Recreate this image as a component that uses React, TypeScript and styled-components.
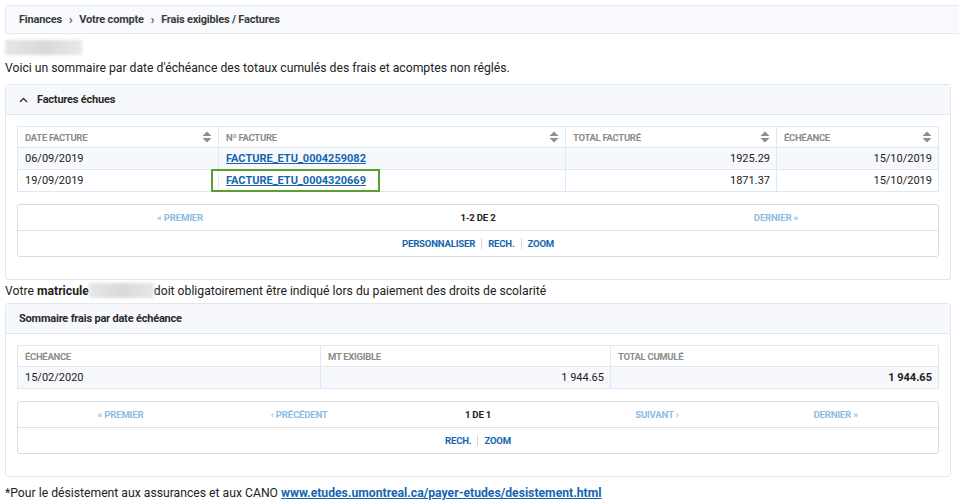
import styled, { createGlobalStyle } from "styled-components";

const GlobalStyle = createGlobalStyle`
  html, body {
    margin: 0;
    padding: 0;
    background: #ffffff;
    font-family: "Roboto", "Liberation Sans", sans-serif;
    color: #222222;
  }
`;

type SortCol = { label: string; sortable?: boolean };

const invoices = [
  { date: "06/09/2019", no: "FACTURE_ETU_0004259082", total: "1925.29", due: "15/10/2019" },
  { date: "19/09/2019", no: "FACTURE_ETU_0004320669", total: "1871.37", due: "15/10/2019", focus: true },
];

const SortIcon = () => (
  <svg width="10" height="12" viewBox="0 0 10 12">
    <path d="M5 0.5 L9.5 5 L0.5 5 Z" fill="#8a8f96" />
    <path d="M5 11.5 L9.5 7 L0.5 7 Z" fill="#8a8f96" />
  </svg>
);

const ChevronUp = () => (
  <svg width="9" height="6" viewBox="0 0 9 6">
    <path d="M1 5 L4.5 1.5 L8 5" fill="none" stroke="#333" strokeWidth="1.4" />
  </svg>
);

const App = () => {
  const cols1: SortCol[] = [
    { label: "Date facture", sortable: true },
    { label: "Nº facture", sortable: true },
    { label: "Total facturé", sortable: true },
    { label: "Échéance", sortable: true },
  ];

  return (
    <Page>
      <GlobalStyle />
      <Breadcrumb>
        <Crumb>Finances</Crumb>
        <Sep>›</Sep>
        <Crumb>Votre compte</Crumb>
        <Sep>›</Sep>
        <Crumb>Frais exigibles / Factures</Crumb>
      </Breadcrumb>

      <Content>
        <Blur $w={77} />
        <Intro>
          Voici un sommaire par date d'échéance des totaux cumulés des frais et acomptes non réglés.
        </Intro>

        <Panel>
          <PanelHeader>
            <ChevronUp />
            <span>Factures échues</span>
          </PanelHeader>
          <PanelBody>
            <Table $cols="201px 347px 211px 1fr">
              {cols1.map((c) => (
                <HeadCell key={c.label}>
                  <span>{c.label}</span>
                  {c.sortable && <SortIcon />}
                </HeadCell>
              ))}
              {invoices.map((r, i) => (
                <Row key={r.no} $alt={i % 2 === 0}>
                  <Cell>{r.date}</Cell>
                  <Cell>
                    <InvoiceLink href="#" $focus={r.focus}>
                      {r.no}
                    </InvoiceLink>
                  </Cell>
                  <Cell $right>{r.total}</Cell>
                  <Cell $right>{r.due}</Cell>
                </Row>
              ))}
            </Table>

            <Pager>
              <PagerRow $cols={3}>
                <PageLink $disabled>« PREMIER</PageLink>
                <PageInfo>1-2 DE 2</PageInfo>
                <PageLink $disabled>DERNIER »</PageLink>
              </PagerRow>
              <Tools>
                <ToolLink>PERSONNALISER</ToolLink>
                <ToolSep />
                <ToolLink>RECH.</ToolLink>
                <ToolSep />
                <ToolLink>ZOOM</ToolLink>
              </Tools>
            </Pager>
          </PanelBody>
        </Panel>

        <Notice>
          Votre <b>matricule</b>
          <Blur $w={65} $inline />
          doit obligatoirement être indiqué lors du paiement des droits de scolarité
        </Notice>

        <Panel>
          <PanelHeader>
            <span>Sommaire frais par date échéance</span>
          </PanelHeader>
          <PanelBody>
            <Table $cols="303px 290px 1fr">
              <HeadCell>Échéance</HeadCell>
              <HeadCell>MT exigible</HeadCell>
              <HeadCell>Total cumulé</HeadCell>
              <Row $alt>
                <Cell>15/02/2020</Cell>
                <Cell $right>1 944.65</Cell>
                <Cell $right $bold>
                  1 944.65
                </Cell>
              </Row>
            </Table>

            <Pager>
              <PagerRow $cols={5}>
                <PageLink $disabled>« PREMIER</PageLink>
                <PageLink $disabled>‹ PRÉCÉDENT</PageLink>
                <PageInfo>1 DE 1</PageInfo>
                <PageLink $disabled>SUIVANT ›</PageLink>
                <PageLink $disabled>DERNIER »</PageLink>
              </PagerRow>
              <Tools>
                <ToolLink>RECH.</ToolLink>
                <ToolSep />
                <ToolLink>ZOOM</ToolLink>
              </Tools>
            </Pager>
          </PanelBody>
        </Panel>

        <Footer>
          *Pour le désistement aux assurances et aux CANO{" "}
          <FooterLink href="#">www.etudes.umontreal.ca/payer-etudes/desistement.html</FooterLink>
        </Footer>
      </Content>
    </Page>
  );
};

export default App;

const Page = styled.div`
  width: 959px;
  height: 501px;
  overflow: hidden;
  padding-top: 5px;
  box-sizing: border-box;
`;

const Breadcrumb = styled.div`
  margin-left: 5px;
  height: 29px;
  box-sizing: border-box;
  border: 1px solid #dceaf7;
  border-right: none;
  border-radius: 3px 0 0 3px;
  background: #f7f9fc;
  display: flex;
  align-items: center;
  gap: 7px;
  padding-left: 13px;
  font-size: 11px;
  font-weight: 700;
  color: #3c3c3c;
  letter-spacing: -0.2px;
`;

const Crumb = styled.span``;

const Sep = styled.span`
  font-size: 12px;
  color: #555;
`;

const Content = styled.div`
  padding: 0 8px 0 5px;
  display: flex;
  flex-direction: column;
`;

const Blur = styled.span<{ $w: number; $inline?: boolean }>`
  display: ${(p) => (p.$inline ? "inline-block" : "block")};
  width: ${(p) => p.$w}px;
  height: 15px;
  margin-top: ${(p) => (p.$inline ? "0" : "6px")};
  vertical-align: ${(p) => (p.$inline ? "-3px" : "baseline")};
  background: linear-gradient(90deg, #e6e6e6, #d9d9d9 50%, #e8e8e8);
  filter: blur(1.5px);
`;

const Intro = styled.div`
  font-size: 12.2px;
  line-height: 16px;
  margin-top: 5px;
  margin-bottom: 8px;
`;

const Panel = styled.section`
  border: 1px solid #d9e9f7;
  border-radius: 3px;
  background: #fff;
`;

const PanelHeader = styled.div`
  height: 30px;
  box-sizing: border-box;
  background: #f6f8fb;
  border-bottom: 1px solid #d9e9f7;
  display: flex;
  align-items: center;
  gap: 9px;
  padding-left: 13px;
  font-size: 11px;
  font-weight: 700;
  color: #2a2a2a;
  letter-spacing: -0.2px;
`;

const PanelBody = styled.div`
  padding: 11px 11px 22px 11px;
  display: flex;
  flex-direction: column;
  gap: 12px;
`;

const Table = styled.div<{ $cols: string }>`
  display: grid;
  grid-template-columns: ${(p) => p.$cols};
  border: 1px solid #d9e9f7;
  border-right: none;
  border-bottom: none;
`;

const HeadCell = styled.div`
  height: 21px;
  box-sizing: border-box;
  border-right: 1px solid #d9e9f7;
  border-bottom: 1px solid #d9e9f7;
  display: flex;
  align-items: center;
  justify-content: space-between;
  padding: 0 6px 0 7px;
  font-size: 9.5px;
  font-weight: 700;
  text-transform: uppercase;
  color: #8c8c8c;
  letter-spacing: -0.3px;
`;

const Row = styled.div<{ $alt?: boolean }>`
  display: contents;
  & > div {
    background: ${(p) => (p.$alt ? "#f6f8fb" : "#ffffff")};
  }
`;

const Cell = styled.div<{ $right?: boolean; $bold?: boolean }>`
  height: 22px;
  box-sizing: border-box;
  border-right: 1px solid #d9e9f7;
  border-bottom: 1px solid #d9e9f7;
  display: flex;
  align-items: center;
  justify-content: ${(p) => (p.$right ? "flex-end" : "flex-start")};
  padding: 0 6px 0 7px;
  font-size: 11px;
  font-weight: ${(p) => (p.$bold ? 700 : 400)};
  color: #222;
`;

const InvoiceLink = styled.a<{ $focus?: boolean }>`
  color: #1565b0;
  font-weight: 700;
  font-size: 11px;
  text-decoration: underline;
  ${(p) =>
    p.$focus &&
    `
    border: 2px solid #5b9e32;
    padding: 3px 12px 3px 13px;
    margin-left: -15px;
  `}
`;

const Pager = styled.div`
  border: 1px solid #dcdcdc;
  border-radius: 3px;
`;

const PagerRow = styled.div<{ $cols: number }>`
  display: grid;
  grid-template-columns: repeat(${(p) => p.$cols}, 1fr);
  height: 25px;
  padding: 0 13px;
  align-items: center;
  justify-items: center;
  border-bottom: 1px solid #e2e2e2;
`;

const PageLink = styled.span<{ $disabled?: boolean }>`
  font-size: 9.6px;
  font-weight: 700;
  letter-spacing: -0.2px;
  color: ${(p) => (p.$disabled ? "#8dbbe3" : "#1565b0")};
`;

const PageInfo = styled.span`
  font-size: 9.6px;
  font-weight: 700;
  color: #222;
  letter-spacing: -0.2px;
`;

const Tools = styled.div`
  height: 25px;
  display: flex;
  align-items: center;
  justify-content: center;
  gap: 6px;
`;

const ToolLink = styled.span`
  font-size: 9.6px;
  font-weight: 700;
  color: #1565b0;
  letter-spacing: -0.2px;
`;

const ToolSep = styled.span`
  width: 1px;
  height: 11px;
  background: #d4d4d4;
`;

const Notice = styled.div`
  font-size: 12.2px;
  line-height: 16px;
  margin: 3px 0 4px;
  b {
    font-weight: 700;
  }
`;

const Footer = styled.div`
  font-size: 12.2px;
  line-height: 16px;
  margin-top: 8px;
`;

const FooterLink = styled.a`
  color: #1565b0;
  font-weight: 700;
  text-decoration: underline;
`;
